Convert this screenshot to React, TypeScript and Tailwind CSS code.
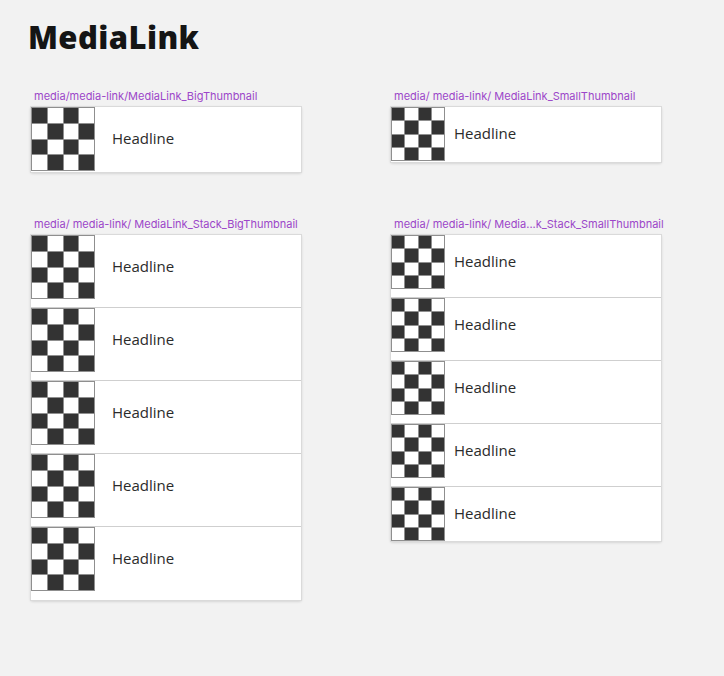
const label = "text-[11px] leading-[12px] text-[#9c46c9] pl-[3px] mb-[5px] whitespace-nowrap font-['Inter',sans-serif]";
const headline = "text-[15px] text-[#2b2b2b]";

function Checker({ size }: { size: number }) {
  const cells = Array.from({ length: 16 }, (_, i) => (Math.floor(i / 4) + (i % 4)) % 2 === 0);
  return (
    <div
      className={`grid grid-cols-4 grid-rows-4 gap-px p-px bg-[#8f8f8f] shrink-0 ${size === 64 ? "w-[64px] h-[64px]" : "w-[54px] h-[54px]"}`}
    >
      {cells.map((dark, i) => (
        <div key={i} className={dark ? "bg-[#333333]" : "bg-white"} />
      ))}
    </div>
  );
}

function Row({ big, pad, divider }: { big: boolean; pad: string; divider: boolean }) {
  return (
    <div className={`flex items-start ${pad} ${divider ? "border-b border-[#cfcfcf]" : ""}`}>
      <Checker size={big ? 64 : 54} />
      <div className={`flex items-center pb-[2px] ${big ? "h-[64px] pl-[17px]" : "h-[54px] pl-[9px]"}`}>
        <span className={headline}>Headline</span>
      </div>
    </div>
  );
}

function Card({ children }: { children: React.ReactNode }) {
  return (
    <div className="bg-white w-[270px] shadow-[0_0_0_1px_#dadada,0_1px_3px_rgba(0,0,0,0.22)]">
      {children}
    </div>
  );
}

export default function App() {
  return (
    <div className="w-full min-h-[676px] bg-[#f2f2f2] font-['Open_Sans',sans-serif]">
      <h1 className="pl-[28px] pt-[22px] text-[31px] leading-[31px] font-extrabold text-[#151515] tracking-[0.4px]">
        MediaLink
      </h1>
      <div className="grid grid-cols-[270px_270px] gap-x-[90px] gap-y-[46px] pl-[31px] pt-[37px] items-start">
        <div>
          <div className={label}>media/media-link/MediaLink_BigThumbnail</div>
          <Card>
            <Row big pad="pb-px" divider={false} />
          </Card>
        </div>
        <div>
          <div className={label}>media/ media-link/ MediaLink_SmallThumbnail</div>
          <Card>
            <Row big={false} pad="pb-px" divider={false} />
          </Card>
        </div>
        <div>
          <div className={label}>media/ media-link/ MediaLink_Stack_BigThumbnail</div>
          <Card>
            {[0, 1, 2, 3].map((i) => (
              <Row key={i} big pad="pb-[8px]" divider />
            ))}
            <Row big pad="pb-[9px]" divider={false} />
          </Card>
        </div>
        <div>
          <div className={label}>media/ media-link/ Media...k_Stack_SmallThumbnail</div>
          <Card>
            {[0, 1, 2, 3].map((i) => (
              <Row key={i} big={false} pad="pb-[8px]" divider />
            ))}
            <Row big={false} pad="" divider={false} />
          </Card>
        </div>
      </div>
    </div>
  );
}
